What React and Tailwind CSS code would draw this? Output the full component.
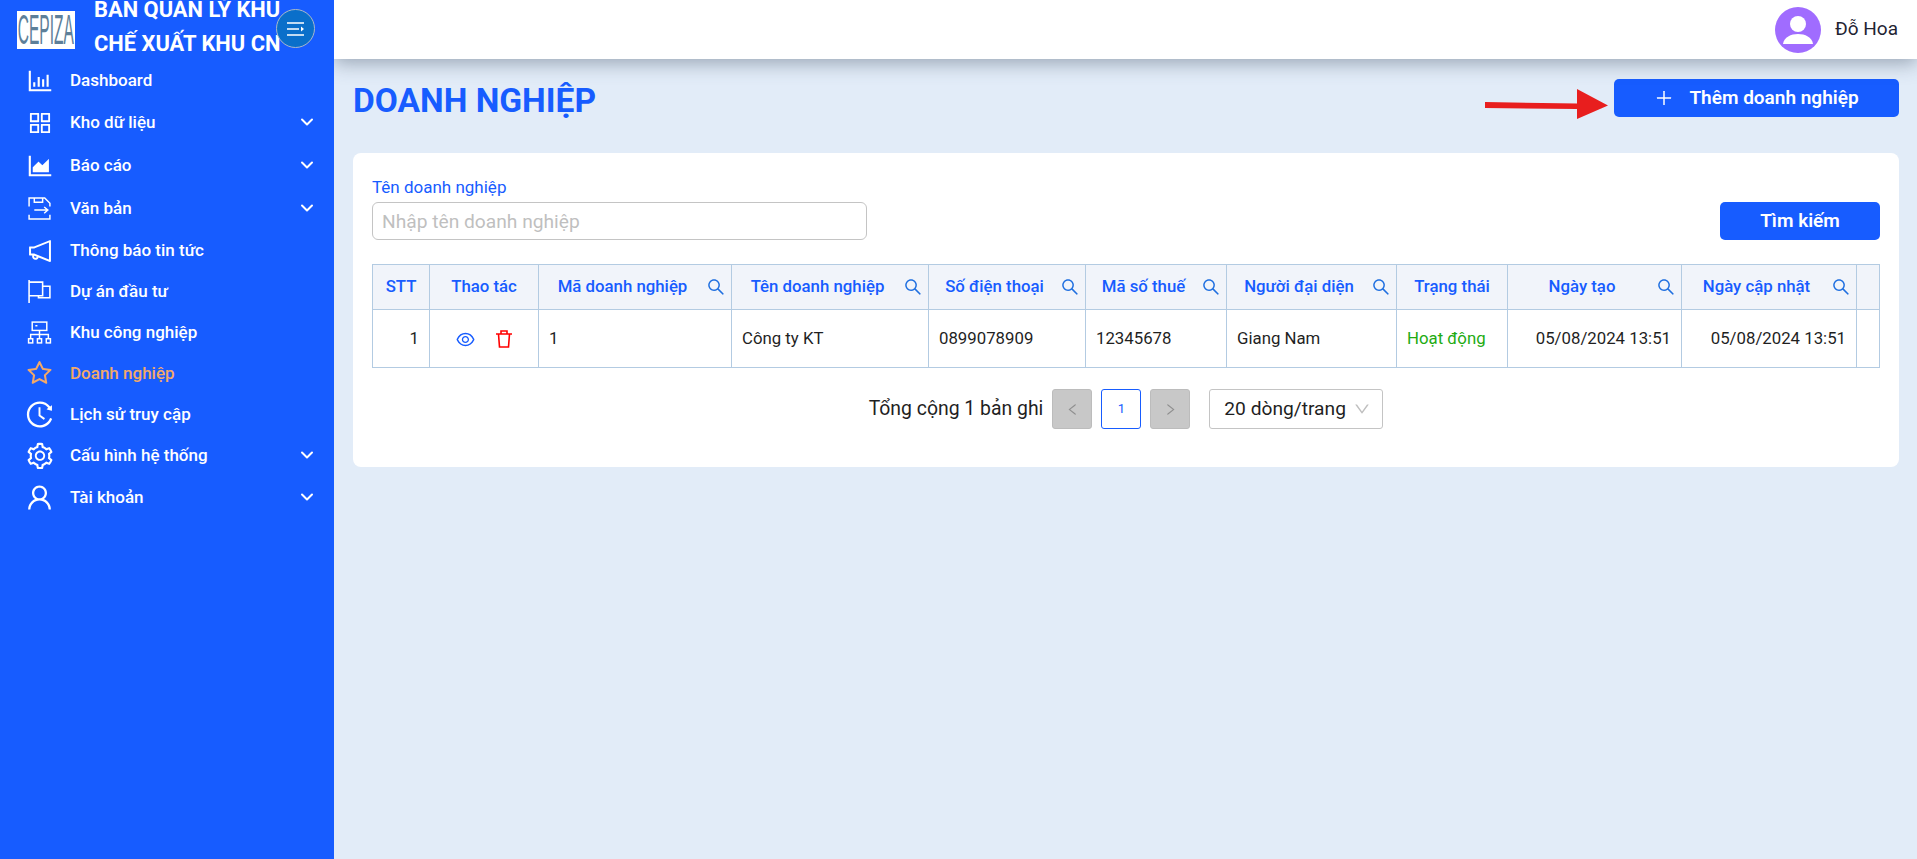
import React from "react";
import {
  AiOutlineBarChart, AiOutlineAppstore, AiOutlineAreaChart, AiOutlineNotification,
  AiOutlineStar, AiOutlineHistory, AiOutlineSetting, AiOutlineUser, AiOutlineSearch,
  AiOutlineEye, AiOutlinePlus, AiOutlineLeft, AiOutlineRight, AiOutlineDown,
} from "react-icons/ai";
import { ChevronDown } from "lucide-react";

const DocIcon = () => (
  <svg width="25" height="25" viewBox="0 0 24 24" fill="none" stroke="currentColor" strokeWidth="1.4">
    <path d="M2 10V2h15l5 5v3" />
    <path d="M7 2v4h8V2" />
    <path d="M2 18v4h20v-4" />
    <path d="M7 13.5h13M16.5 10.5l3.5 3-3.5 3" />
  </svg>
);
const FlagIcon = () => (
  <svg width="25" height="25" viewBox="0 0 24 24" fill="none" stroke="currentColor" strokeWidth="1.5">
    <path d="M2 1v22" />
    <path d="M2 3h13v13H2" />
    <path d="M15 7h7v11H11v-2" />
  </svg>
);
const ClusterIcon = () => (
  <svg width="25" height="25" viewBox="0 0 24 24" fill="none" stroke="currentColor" strokeWidth="1.4">
    <rect x="5" y="2" width="14" height="8" />
    <path d="M8 5.5h2" />
    <path d="M12 10v8M3.5 18v-4h17v4" />
    <rect x="1.5" y="18" width="4" height="4" />
    <rect x="10" y="18" width="4" height="4" />
    <rect x="18.5" y="18" width="4" height="4" />
  </svg>
);

const menu = [
  { label: "Dashboard", icon: <AiOutlineBarChart size={30} />, h: "h-[41px]" },
  { label: "Kho dữ liệu", icon: <AiOutlineAppstore size={28} />, h: "h-[43px]", arrow: true },
  { label: "Báo cáo", icon: <AiOutlineAreaChart size={30} />, h: "h-[43px]", arrow: true },
  { label: "Văn bản", icon: <DocIcon />, h: "h-[43px]", arrow: true },
  { label: "Thông báo tin tức", icon: <AiOutlineNotification size={28} />, h: "h-[41px]" },
  { label: "Dự án đầu tư", icon: <FlagIcon />, h: "h-[41px]" },
  { label: "Khu công nghiệp", icon: <ClusterIcon />, h: "h-[41px]" },
  { label: "Doanh nghiệp", icon: <AiOutlineStar size={29} />, h: "h-[41px]", active: true },
  { label: "Lịch sử truy cập", icon: <AiOutlineHistory size={31} />, h: "h-[41px]" },
  { label: "Cấu hình hệ thống", icon: <AiOutlineSetting size={30} />, h: "h-[41px]", arrow: true },
  { label: "Tài khoản", icon: <AiOutlineUser size={31} />, h: "h-[43px]", arrow: true },
];

const heads = [
  { t: "STT", w: "w-[57px]" },
  { t: "Thao tác", w: "w-[109px]" },
  { t: "Mã doanh nghiệp", w: "w-[193px]", s: true },
  { t: "Tên doanh nghiệp", w: "w-[197px]", s: true },
  { t: "Số điện thoại", w: "w-[157px]", s: true },
  { t: "Mã số thuế", w: "w-[141px]", s: true },
  { t: "Người đại diện", w: "w-[170px]", s: true },
  { t: "Trạng thái", w: "w-[111px]" },
  { t: "Ngày tạo", w: "w-[174px]", s: true },
  { t: "Ngày cập nhật", w: "w-[175px]", s: true },
  { t: "", w: "w-[23px]" },
];

const td = "border border-[#b3cbe2] px-[10px] pt-[1px] text-[16.8px] text-[#1f1f1f] font-normal";

export default function App() {
  return (
    <div className="flex h-screen w-full overflow-hidden bg-[#e2ecf8] font-[Roboto,sans-serif]">
      <aside className="relative z-20 flex w-[334px] shrink-0 flex-col bg-[#175cff] text-white">
        <div className="relative flex h-[60px] shrink-0 items-center overflow-hidden pl-[17px]">
          <div className="flex h-[38px] w-[58px] shrink-0 items-center justify-center bg-white">
            <span className="shrink-0 scale-x-[0.37] font-['Liberation_Sans',sans-serif] text-[42px] leading-none text-[#5d7f99]">CEPIZA</span>
          </div>
          <div className="mb-[6px] ml-[19px] flex shrink-0 flex-col whitespace-nowrap text-[21.9px] leading-[34px] font-bold">
            <span>BAN QUẢN LÝ KHU</span>
            <span>CHẾ XUẤT KHU CN</span>
          </div>
          <div className="absolute top-[9px] left-[276px] flex h-[39px] w-[39px] items-center justify-center rounded-full border border-[#a9b8c9] bg-[#0a6fca]">
            <svg width="18" height="14" viewBox="0 0 18 14" fill="none" stroke="white" strokeWidth="1.4">
              <path d="M0 1h17M0 7h12M0 13h17" />
              <path d="M14 4.5l3 2.5-3 2.5z" fill="white" stroke="none" />
            </svg>
          </div>
        </div>
        <nav className="flex flex-col">
          {menu.map((m) => (
            <div key={m.label} className={`flex items-center pl-[27px] pr-[18px] ${m.h} ${m.active ? "text-[#f3a968]" : "text-white"}`}>
              <span className="mr-[18px] flex w-[25px] justify-center [&>svg]:shrink-0">{m.icon}</span>
              <span className="flex-1 text-[17px] font-medium">{m.label}</span>
              {m.arrow && <ChevronDown size={20} strokeWidth={2.4} className="mb-[2px] mr-[-1px]" />}
            </div>
          ))}
        </nav>
      </aside>

      <div className="relative flex min-w-0 flex-1 flex-col">
        <header className="relative z-10 flex h-[59px] shrink-0 items-center justify-end bg-white pr-[19px] shadow-[0_4px_18px_rgba(60,75,95,0.45)]">
          <svg width="46" height="46" viewBox="0 0 46 46" className="mr-[14px]">
            <circle cx="23" cy="23" r="23" fill="#a06cff" />
            <circle cx="23" cy="17" r="8" fill="white" />
            <path d="M8 37c1-7 8-10 15-10s14 3 15 10z" fill="white" />
          </svg>
          <span className="text-[19px] text-[#1f2433]">Đỗ Hoa</span>
        </header>

        <main className="relative flex flex-1 flex-col pl-[19px] pr-[18px] pt-[20px]">
          <div className="flex h-[38px] items-center justify-between">
            <h1 className="mt-[6px] text-[33.5px] font-bold leading-none text-[#175cff]">DOANH NGHIỆP</h1>
            <button className="flex h-[38px] w-[285px] items-center justify-center gap-[15px] rounded-[5px] bg-[#175cff] text-[19px] font-semibold text-white">
              <AiOutlinePlus size={20} />
              Thêm doanh nghiệp
            </button>
          </div>

          <svg width="124" height="32" viewBox="0 0 124 32" className="absolute left-[1151px] top-[30px]">
            <path d="M0 13l92 1.5V0l31 16.5L92 30V20L0 19z" fill="#e81e1e" />
          </svg>

          <section className="mt-[36px] flex h-[314px] flex-col rounded-lg bg-white px-[19px] pt-[23px]">
            <div className="flex items-end justify-between">
              <div className="flex w-[495px] flex-col">
                <label className="mb-[4px] text-[17px] leading-[22px] text-[#175cff]">Tên doanh nghiệp</label>
                <input
                  placeholder="Nhập tên doanh nghiệp"
                  className="h-[38px] rounded-md border border-[#c4c4c4] px-[9px] text-[19.2px] outline-none placeholder:text-[#bfbfbf]"
                />
              </div>
              <button className="h-[38px] w-[160px] rounded-[5px] bg-[#175cff] text-[19px] font-semibold text-white">Tìm kiếm</button>
            </div>

            <table className="mt-[24px] w-[1508px] table-fixed border-collapse">
              <thead>
                <tr className="h-[45px] bg-[#f1f4fa]">
                  {heads.map((h, i) => (
                    <th key={i} className={`border border-[#b3cbe2] p-0 text-[16.8px] font-medium text-[#175cff] ${h.w}`}>
                      <div className={`flex items-center ${h.s ? "pr-[5px]" : ""}`}>
                        <span className="flex-1 text-center">{h.t}</span>
                        {h.s && <AiOutlineSearch size={20} className="text-[#1f6fe0]" />}
                      </div>
                    </th>
                  ))}
                </tr>
              </thead>
              <tbody>
                <tr className="h-[58px]">
                  <td className={`${td} text-right`}>1</td>
                  <td className={td}>
                    <div className="flex items-center justify-center gap-[20px] pr-[2px]">
                      <AiOutlineEye size={21} className="text-[#175cff]" />
                      <svg width="16" height="18" viewBox="0 0 16 18" fill="none" stroke="#ff0000" strokeWidth="1.6">
                        <path d="M0 4h16M5 4V1h6v3M2.5 4l1 13h9l1-13" />
                      </svg>
                    </div>
                  </td>
                  <td className={td}>1</td>
                  <td className={td}>Công ty KT</td>
                  <td className={td}>0899078909</td>
                  <td className={td}>12345678</td>
                  <td className={td}>Giang Nam</td>
                  <td className={`${td} !text-[#22ab12]`}>Hoạt động</td>
                  <td className={`${td} text-right`}>05/08/2024 13:51</td>
                  <td className={`${td} text-right`}>05/08/2024 13:51</td>
                  <td className={td}></td>
                </tr>
              </tbody>
            </table>

            <div className="mt-[21px] flex h-[40px] items-center justify-center">
              <span className="mr-[9px] text-[19.4px] text-[#1f1f1f]">Tổng cộng 1 bản ghi</span>
              <span className="flex h-[40px] w-[40px] items-center justify-center rounded-[3px] border border-[#bcbcbc] bg-[#c8c8c8] text-[#8f8f8f]"><AiOutlineLeft size={15} /></span>
              <span className="ml-[9px] flex h-[40px] w-[40px] items-center justify-center rounded-[3px] border border-[#175cff] text-[13px] text-[#175cff]">1</span>
              <span className="ml-[9px] flex h-[40px] w-[40px] items-center justify-center rounded-[3px] border border-[#bcbcbc] bg-[#c8c8c8] text-[#8f8f8f]"><AiOutlineRight size={15} /></span>
              <span className="ml-[19px] flex h-[40px] w-[174px] items-center justify-between rounded-[3px] border border-[#c4c4c4] pl-[14px] pr-[11px] text-[19.2px] text-[#1f1f1f]">
                20 dòng/trang
                <AiOutlineDown size={18} className="text-[#bfbfbf]" />
              </span>
            </div>
          </section>
        </main>
      </div>
    </div>
  );
}
